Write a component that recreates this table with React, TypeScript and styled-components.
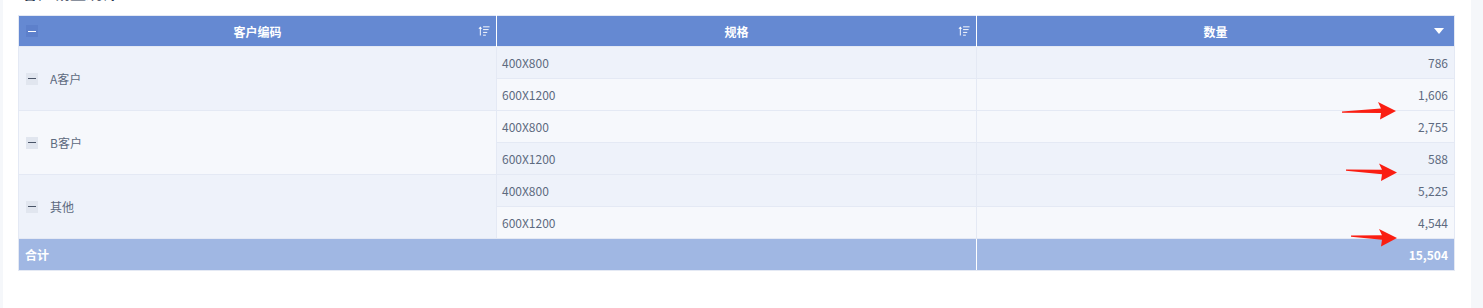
import * as React from 'react';
import styled, { createGlobalStyle } from 'styled-components';

const GlobalStyle = createGlobalStyle`
  html, body {
    margin: 0;
    padding: 0;
    background: #f5f7fa;
    font-family: "Noto Sans CJK SC", "Noto Sans", sans-serif;
    overflow: hidden;
  }
`;

const Page = styled.div`
  position: relative;
  height: 308px;
  padding: 0 12px 0 3px;
  overflow: hidden;
`;

const Card = styled.div`
  margin-top: -22px;
  background: #fff;
  padding: 0 16px 40px 15px;
  height: 400px;
`;

const TitleBar = styled.div`
  height: 37px;
  display: flex;
  justify-content: space-between;
  align-items: flex-start;
  padding: 3px 0 0 4px;
  box-sizing: border-box;
`;

const Title = styled.span`
  font-size: 16px;
  line-height: 22px;
  font-weight: bold;
  color: #2e3a52;
`;

const More = styled.span`
  font-size: 14px;
  line-height: 22px;
  color: #c0c4cc;
`;

const Table = styled.table`
  width: 100%;
  border-collapse: collapse;
  table-layout: fixed;
  font-size: 12px;
  color: #5d6a80;
`;

const HeadCell = styled.th`
  position: relative;
  height: 31px;
  padding: 0 6px;
  box-sizing: border-box;
  background: #6589d2;
  color: #fff;
  font-weight: bold;
  text-align: center;
  border-right: 1px solid #fff;
  border-top: 1px solid #e4e9f4;
  &:first-child {
    border-left: 1px solid #e4e9f4;
  }
  &:last-child {
    border-right: 1px solid #e4e9f4;
  }
`;

const HeadTool = styled.span<{ $side: 'left' | 'right'; $inset?: number }>`
  position: absolute;
  top: 9px;
  ${(p) => (p.$side === 'left' ? `left: ${p.$inset ?? 7}px;` : `right: ${p.$inset ?? 6}px;`)}
  display: flex;
  align-items: center;
  justify-content: center;
  width: 12px;
  height: 12px;
`;

const MinusBox = styled.span<{ $head?: boolean }>`
  display: inline-flex;
  align-items: center;
  justify-content: center;
  width: 12px;
  height: 12px;
  background: ${(p) => (p.$head ? '#5d80cb' : '#e1e6ef')};
  &::before {
    content: '';
    width: 8px;
    height: 1px;
    background: ${(p) => (p.$head ? '#fff' : '#4a5568')};
  }
`;

const Cell = styled.td<{ $bg: string; $align?: 'left' | 'right' }>`
  height: 32px;
  padding: 0 6px 0 5px;
  box-sizing: border-box;
  background: ${(p) => p.$bg};
  text-align: ${(p) => p.$align || 'left'};
  border: 1px solid #e4e9f4;
  white-space: nowrap;
`;

const GroupInner = styled.div`
  display: flex;
  align-items: center;
  gap: 12px;
  padding-left: 2px;
`;

const TotalCell = styled.td<{ $align?: 'left' | 'right' }>`
  height: 32px;
  padding: 0 6px;
  box-sizing: border-box;
  background: #a0b7e3;
  color: #fff;
  font-weight: bold;
  text-align: ${(p) => p.$align || 'left'};
  border: 1px solid #e4e9f4;
  border-right-color: #fff;
  &:last-child {
    border-right-color: #e4e9f4;
  }
`;

const Overlay = styled.svg`
  position: absolute;
  left: 0;
  top: 0;
  pointer-events: none;
`;

const BLUE = '#eef2fa';
const LIGHT = '#f6f8fc';

interface Group {
  name: string;
  bg: string;
  rows: { spec: string; qty: string; bg: string }[];
}

const groups: Group[] = [
  {
    name: 'A客户',
    bg: BLUE,
    rows: [
      { spec: '400X800', qty: '786', bg: BLUE },
      { spec: '600X1200', qty: '1,606', bg: LIGHT },
    ],
  },
  {
    name: 'B客户',
    bg: LIGHT,
    rows: [
      { spec: '400X800', qty: '2,755', bg: LIGHT },
      { spec: '600X1200', qty: '588', bg: BLUE },
    ],
  },
  {
    name: '其他',
    bg: BLUE,
    rows: [
      { spec: '400X800', qty: '5,225', bg: BLUE },
      { spec: '600X1200', qty: '4,544', bg: LIGHT },
    ],
  },
];

const SortIcon = (): JSX.Element => (
  <svg width="13" height="12" viewBox="0 0 13 12">
    <path d="M2.5 1 L0.5 3.5 H2 V11 H3 V3.5 H4.5 Z" fill="#fff" />
    <rect x="5.5" y="1" width="7" height="1" fill="#fff" />
    <rect x="5.5" y="4" width="6" height="1" fill="#fff" />
    <rect x="5.5" y="7" width="4.5" height="1" fill="#fff" />
    <rect x="5.5" y="10" width="3" height="1" fill="#fff" />
  </svg>
);

const DownIcon = (): JSX.Element => (
  <svg width="10" height="6" viewBox="0 0 10 6">
    <path d="M0 0 H10 L5 6 Z" fill="#fff" />
  </svg>
);

// red annotation arrows drawn over the table
const arrows = [
  { x: 1342, y: 112, tip: 1396, ty: 111 },
  { x: 1346, y: 170, tip: 1397, ty: 172.5 },
  { x: 1351, y: 236, tip: 1397, ty: 238 },
];

const arrowPoints = (a: { x: number; y: number; tip: number; ty: number }): string => {
  const back = a.tip - 17;
  const my = (a.y + a.ty) / 2;
  return [
    `${a.x},${a.y - 0.5}`,
    `${back + 2},${my - 2.5 + (a.ty - a.y) * 0.4}`,
    `${back - 1},${a.ty - 9}`,
    `${a.tip},${a.ty}`,
    `${back + 1},${a.ty + 8.5}`,
    `${back + 2},${my + 2 + (a.ty - a.y) * 0.4}`,
    `${a.x},${a.y + 0.8}`,
  ].join(' ');
};

const App = (): React.ReactElement => {
  return (
    <>
      <GlobalStyle />
      <Page>
        <Card>
          <TitleBar>
            <Title>客户销量统计</Title>
            <More>···</More>
          </TitleBar>
          <Table>
            <colgroup>
              <col style={{ width: 478 }} />
              <col style={{ width: 480 }} />
              <col />
            </colgroup>
            <thead>
              <tr>
                <HeadCell>
                  <HeadTool $side="left">
                    <MinusBox $head />
                  </HeadTool>
                  客户编码
                  <HeadTool $side="right">
                    <SortIcon />
                  </HeadTool>
                </HeadCell>
                <HeadCell>
                  规格
                  <HeadTool $side="right">
                    <SortIcon />
                  </HeadTool>
                </HeadCell>
                <HeadCell>
                  数量
                  <HeadTool $side="right" $inset={9}>
                    <DownIcon />
                  </HeadTool>
                </HeadCell>
              </tr>
            </thead>
            <tbody>
              {groups.map((g) =>
                g.rows.map((r, i) => (
                  <tr key={g.name + r.spec}>
                    {i === 0 && (
                      <Cell $bg={g.bg} rowSpan={g.rows.length}>
                        <GroupInner>
                          <MinusBox />
                          <span>{g.name}</span>
                        </GroupInner>
                      </Cell>
                    )}
                    <Cell $bg={r.bg}>{r.spec}</Cell>
                    <Cell $bg={r.bg} $align="right">
                      {r.qty}
                    </Cell>
                  </tr>
                ))
              )}
              <tr>
                <TotalCell colSpan={2}>合计</TotalCell>
                <TotalCell $align="right">15,504</TotalCell>
              </tr>
            </tbody>
          </Table>
        </Card>
        <Overlay width="1483" height="308">
          {arrows.map((a) => (
            <polygon key={a.y} points={arrowPoints(a)} fill="#fa1e12" />
          ))}
        </Overlay>
      </Page>
    </>
  );
};

export default App;
